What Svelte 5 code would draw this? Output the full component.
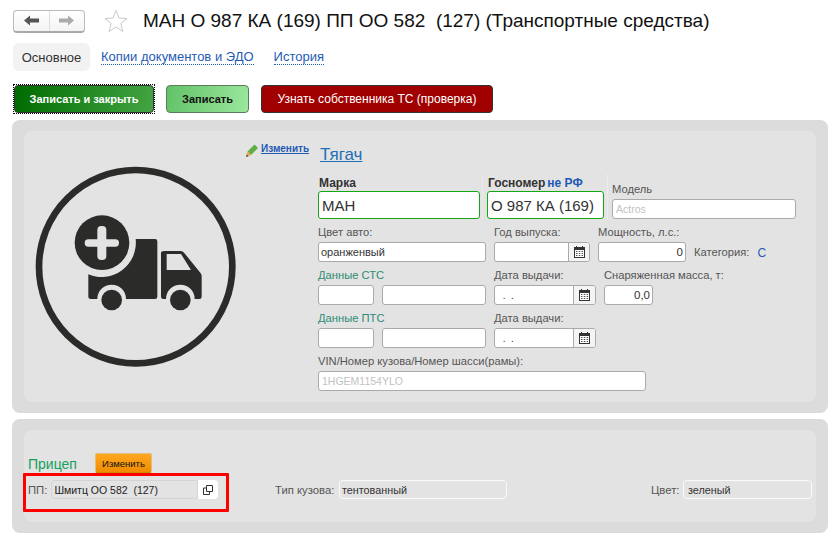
<script>
  const tabs = ['Копии документов и ЭДО', 'История'];
</script>

<div class="page">
  <header class="head">
    <div class="nav">
      <span class="navbtn">
        <svg width="15" height="11" viewBox="0 0 15 11"><path d="M0 5.500 6 .5v3h9v4H6v3z" fill="#555"/></svg>
      </span>
      <span class="navbtn">
        <svg width="15" height="11" viewBox="0 0 15 11"><path d="M15 5.500 9 .5v3H0v4h9v3z" fill="#aaa"/></svg>
      </span>
    </div>
    <svg class="star" width="24" height="24" viewBox="0 0 24 24"><path d="M12 1.500 15 9l8 .5-6.200 5 2.100 8L12 18l-6.900 4.500 2.100-8L1 9.500 9 9z" fill="#fff" stroke="#c9c9c9"/></svg>
    <h1>МАН О 987 КА (169) ПП ОО 582&nbsp; (127) (Транспортные средства)</h1>
  </header>

  <nav class="tabs">
    <span class="tab">Основное</span>
    {#each tabs as t}
      <a class="tablink" href="#top">{t}</a>
    {/each}
  </nav>

  <div class="actions">
    <span class="focus"><button class="btn dark">Записать и закрыть</button></span>
    <button class="btn light">Записать</button>
    <button class="btn red">Узнать собственника ТС (проверка)</button>
  </div>

  <section class="panel truck">
    <div class="inner truckinner">
      <svg class="bigicon" width="280" height="240" viewBox="0 0 840 720">
        <circle cx="347" cy="350" r="290" fill="none" stroke="#2b2b2a" stroke-width="20"/>
        <path d="M347 267H405Q412 267 412 274V440Q412 447 405 447H318A43 43 0 0 0 232 447H212Q205 447 205 440V373A103 103 0 0 0 347 267Z" fill="#2b2b2a"/>
        <path fill-rule="evenodd" d="M432 303H483Q488 303 492 308L541 368Q545 373 545 378V440Q545 447 538 447H524A43 43 0 0 0 438 447H430Q423 447 423 440V310Q423 303 432 303ZM440 312V360H513L483 312Z" fill="#2b2b2a"/>
        <circle cx="275" cy="450" r="31" fill="#2b2b2a"/>
        <circle cx="481" cy="450" r="31" fill="#2b2b2a"/>
        <circle cx="246" cy="278" r="82" fill="#2b2b2a"/>
        <rect x="194" y="268" width="103" height="22" rx="11" fill="#e3e3e3"/>
        <rect x="232" y="228" width="27" height="102" rx="12" fill="#e3e3e3"/>
      </svg>

      <div class="edit">
        <svg width="14" height="15" viewBox="0 0 14 15">
          <path d="M2.500 8.500 9.500 1.500 13 5 6 12z" fill="#5fae45"/>
          <path d="M2.500 8.500 6 12 1 14z" fill="#e8a33c"/>
          <path d="M1 14l.8-2.600 1.800 1.800z" fill="#4a4a4a"/>
        </svg>
        <a href="#top">Изменить</a>
      </div>

      <div class="form">
        <a class="caption" href="#top">Тягач</a>

        <div class="toprow">
          <div class="f marka">
            <span class="boldlabel">Марка</span>
            <span class="input big green">МАН</span>
          </div>
          <div class="f gos">
            <span class="boldlabel">Госномер<b>не РФ</b></span>
            <span class="input big green">О 987 КА (169)</span>
          </div>
          <div class="f model">
            <span class="label">Модель</span>
            <span class="input muted">Actros</span>
          </div>
        </div>

        <div class="row r1">
          <div class="f w168"><span class="label">Цвет авто:</span><span class="input">оранженвый</span></div>
          <div class="f w96"><span class="label">Год выпуска:</span>
            <span class="input date"><span class="val"></span><span class="cal">{@render cal()}</span></span>
          </div>
          <div class="f w88"><span class="label">Мощность, л.с.:</span><span class="input num">0</span></div>
          <span class="cat">Категория:</span><span class="catv">С</span>
        </div>

        <div class="row">
          <div class="pair">
            <span class="label teal">Данные СТС</span>
            <div class="two"><span class="input a"></span><span class="input b"></span></div>
          </div>
          <div class="f w102"><span class="label">Дата выдачи:</span>
            <span class="input date"><span class="val">&nbsp;.&nbsp;&nbsp;.</span><span class="cal wide">{@render cal()}</span></span>
          </div>
          <div class="f w49"><span class="label nowrap">Снаряженная масса, т:</span><span class="input num">0,0</span></div>
        </div>

        <div class="row">
          <div class="pair">
            <span class="label teal">Данные ПТС</span>
            <div class="two"><span class="input a"></span><span class="input b"></span></div>
          </div>
          <div class="f w102"><span class="label">Дата выдачи:</span>
            <span class="input date"><span class="val">&nbsp;.&nbsp;&nbsp;.</span><span class="cal wide">{@render cal()}</span></span>
          </div>
        </div>

        <div class="row">
          <div class="f w328"><span class="label">VIN/Номер кузова/Номер шасси(рамы):</span><span class="input muted vin">1HGEM1154YLO</span></div>
        </div>
      </div>
    </div>
  </section>

  <section class="panel trailer">
    <div class="inner trailerinner">
      <div class="trailerhead">
        <span class="trailertitle">Прицеп</span>
        <button class="orange">Изменить</button>
      </div>
      <div class="trailerrow">
        <div class="hl">
          <span class="tlabel">ПП:</span>
          <span class="tinput pp">Шмитц ОО 582&nbsp; (127)</span>
          <span class="open">
            <svg width="12" height="12" viewBox="0 0 12 12"><path d="M4.500 1.500h6v6h-6zM4.500 4H1.500v6.500h6V7.500" fill="none" stroke="#333"/></svg>
          </span>
        </div>
        <span class="tlabel kuzov">Тип кузова:</span>
        <span class="tinput body">тентованный</span>
        <span class="tlabel color">Цвет:</span>
        <span class="tinput colorv">зеленый</span>
      </div>
    </div>
  </section>
</div>

{#snippet cal()}
  <svg width="11" height="12" viewBox="0 0 11 12">
    <path d="M2.500 0v2M8.500 0v2" stroke="#333" fill="none"/>
    <rect x=".5" y="1.500" width="10" height="10" fill="#fff" stroke="#333"/>
    <rect x="0" y="1" width="11" height="3" fill="#333"/>
    <path d="M2 5.500h1.500M4.800 5.500h1.500M7.600 5.500h1.500M2 7.500h1.500M4.800 7.500h1.500M7.600 7.500h1.500M2 9.500h1.500M4.800 9.500h1.500M7.600 9.500h1.500" stroke="#555" fill="none"/>
  </svg>
{/snippet}

<style>
  :global(body) { margin: 0; background: #fff; }
  .page {
    width: 835px; height: 538px; overflow: hidden; box-sizing: border-box;
    padding: 9px 7px 0 12px;
    font-family: "Liberation Sans", Arial, sans-serif;
    font-size: 11.200px; color: #333;
  }
  .head { display: flex; align-items: center; height: 24px; margin-left: 1px; }
  .nav {
    display: flex; width: 72px; height: 23px; box-sizing: border-box;
    border: 1px solid #bbb; border-bottom: 2px solid #aaa; border-radius: 4px;
    background: linear-gradient(#fff, #f4f4f4);
  }
  .navbtn { flex: 1; display: flex; align-items: center; justify-content: center; }
  .navbtn + .navbtn { border-left: 1px solid #ddd; }
  .star { margin-left: 19px; }
  h1 { margin: 0 0 0 15px; font-size: 19px; font-weight: 400; color: #111; white-space: nowrap; line-height: 24px; }

  .tabs { display: flex; align-items: center; margin: 10px 0 0 1px; height: 28px; font-size: 13px; }
  .tab { display: flex; align-items: center; justify-content: center; width: 77px; height: 28px; background: #f2f2f2; border-radius: 6px; color: #333; }
  .tablink { margin-left: 11px; color: #1f5bb5; text-decoration: none; border-bottom: 1px dotted #1f5bb5; line-height: 15px; }
  .tablink + .tablink { margin-left: 20px; }

  .actions { display: flex; align-items: center; gap: 12px; margin: 14px 0 0 2px; height: 28px; }
  .focus { display: block; outline: 1px dotted #000; outline-offset: 0; height: 28px; }
  .btn {
    height: 28px; box-sizing: border-box; border: 1px solid #333; border-radius: 4px;
    font: 11.500px "Liberation Sans", Arial, sans-serif; padding: 0; cursor: default;
  }
  .dark { display: block; width: 140px; color: #fff; font-weight: 700; font-size: 11px; background: linear-gradient(100deg, #006b00, #43a543); }
  .light { width: 83px; color: #111; font-size: 11px; font-weight: 700; background: linear-gradient(100deg, #62c267, #9be79d); border-color: #5c7a5c; }
  .red { width: 232px; color: #fff; font-size: 12px; background: #a00000; }

  .panel { background: #dcdcdc; border-radius: 8px; width: 816px; box-sizing: border-box; padding: 11px 12px; }
  .truck { margin-top: 7px; height: 293px; }
  .trailer { margin-top: 6px; height: 114px; }
  .inner { background: #e3e3e3; border-radius: 8px; box-sizing: border-box; height: 100%; }
  .truckinner { display: flex; align-items: flex-start; }
  .bigicon { flex: none; margin: 19px 0 0 -4px; }
  .edit { flex: none; width: 74px; margin: 12px 0 0 -55px; display: flex; align-items: flex-start; gap: 2px; }
  .edit a { font-size: 10px; font-weight: 700; color: #1f5bb5; }

  .form { flex: none; width: 480px; margin-left: -1px; padding-top: 14px; }
  .caption { display: inline-block; margin-left: 2px; font-size: 17px; line-height: 19px; color: #1f6fb5; text-decoration: underline; }
  .f { display: flex; flex-direction: column; flex: none; }
  .label { height: 14px; line-height: 14px; margin-bottom: 3px; color: #555; }
  .nowrap { white-space: nowrap; }
  .teal { color: #2e8b74; }
  .boldlabel { height: 16px; line-height: 16px; margin-left: 1px; font-weight: 700; font-size: 12px; color: #333; white-space: nowrap; }
  .boldlabel b { color: #1f5bb5; margin-left: 2px; }

  .input {
    display: flex; align-items: center; box-sizing: border-box; height: 20px;
    background: #fff; border: 1px solid #aaa; border-radius: 3px;
    padding: 0 2px; font-size: 11px; color: #333; overflow: hidden; white-space: nowrap;
  }
  .big { height: 28px; font-size: 15px; padding: 0 3px; }
  .green { border-color: #13a813; }
  .muted { color: #c2c2c2; font-size: 10.500px; padding-left: 3px; }
  .num { justify-content: flex-end; padding-right: 2px; font-size: 11.500px; }
  .date { padding: 0; }
  .val { flex: 1; padding-left: 5px; font-size: 10px; }
  .cal { flex: none; width: 21px; height: 100%; box-sizing: border-box; border-left: 1px solid #aaa; display: flex; align-items: center; justify-content: center; background: #f4f4f4; }
  .wide { width: 22px; }

  .toprow { display: flex; align-items: flex-end; margin-top: 7px; height: 48px; }
  .marka { width: 162px; }
  .gos { width: 117px; margin-left: 7px; padding-left: 0; }
  .model { width: 184px; margin-left: 8px; }
  .marka, .gos { position: relative; }
  .gos::before, .gos::after {
    content: ""; position: absolute; top: 0; bottom: 0; border-left: 1px dotted #f2f2f2;
  }
  .gos::before { left: -5px; }
  .gos::after { right: -4px; }

  .row { display: flex; align-items: flex-end; gap: 8px; margin-top: 6px; }
  .r1 { margin-top: 6px; }
  .w168 { width: 168px; }
  .w96 { width: 96px; }
  .w88 { width: 88px; }
  .w102 { width: 102px; }
  .w49 { width: 49px; }
  .w328 { width: 328px; }
  .cat { height: 20px; line-height: 20px; color: #555; }
  .catv { height: 20px; line-height: 22px; color: #1f5bb5; font-size: 12px; }
  .pair { display: flex; flex-direction: column; width: 168px; }
  .two { display: flex; gap: 8px; }
  .a { width: 56px; }
  .b { width: 104px; }

  .trailerinner { display: flex; flex-direction: column; padding: 23px 0 0 4px; }
  .trailerhead { display: flex; align-items: center; height: 20px; }
  .trailertitle { width: 67px; font-size: 14px; color: #16a05a; margin-top: 1px; }
  .orange {
    width: 57px; height: 20px; padding: 0; border: 1px solid #e0c080; border-bottom-color: #d08a00; border-radius: 2px;
    font: 9.500px "Liberation Sans", Arial, sans-serif; color: #111;
    background: linear-gradient(#ffa820, #f08c00);
  }
  .trailerrow { position: relative; display: flex; align-items: center; margin-top: 7px; height: 19px; }
  .tlabel { color: #555; font-size: 11.300px; white-space: nowrap; }
  .tinput {
    display: flex; align-items: center; box-sizing: border-box; height: 19px;
    border: 1px solid #fafafa; border-radius: 4px; font-size: 10.800px; color: #333; padding: 0 2px;
  }
  .hl { flex: none; display: flex; align-items: center; width: 247px; height: 19px; position: relative; }
  .hl::after {
    content: ""; position: absolute; left: -5px; top: -7px; width: 206px; height: 39px;
    box-sizing: border-box; border: 3px solid #f00; border-radius: 1px;
  }
  .pp { width: 147px; margin-left: 4px; border-color: #d4d4d4; border-radius: 4px 0 0 4px; color: #222; font-size: 10.500px; }
  .open { width: 20px; height: 19px; display: flex; align-items: center; justify-content: center; background: #fff; border-radius: 0 4px 4px 0; }
  .kuzov { width: 64px; }
  .body { width: 168px; }
  .color { margin-left: 144px; width: 32px; }
  .colorv { width: 129px; padding-left: 4px; }
</style>
